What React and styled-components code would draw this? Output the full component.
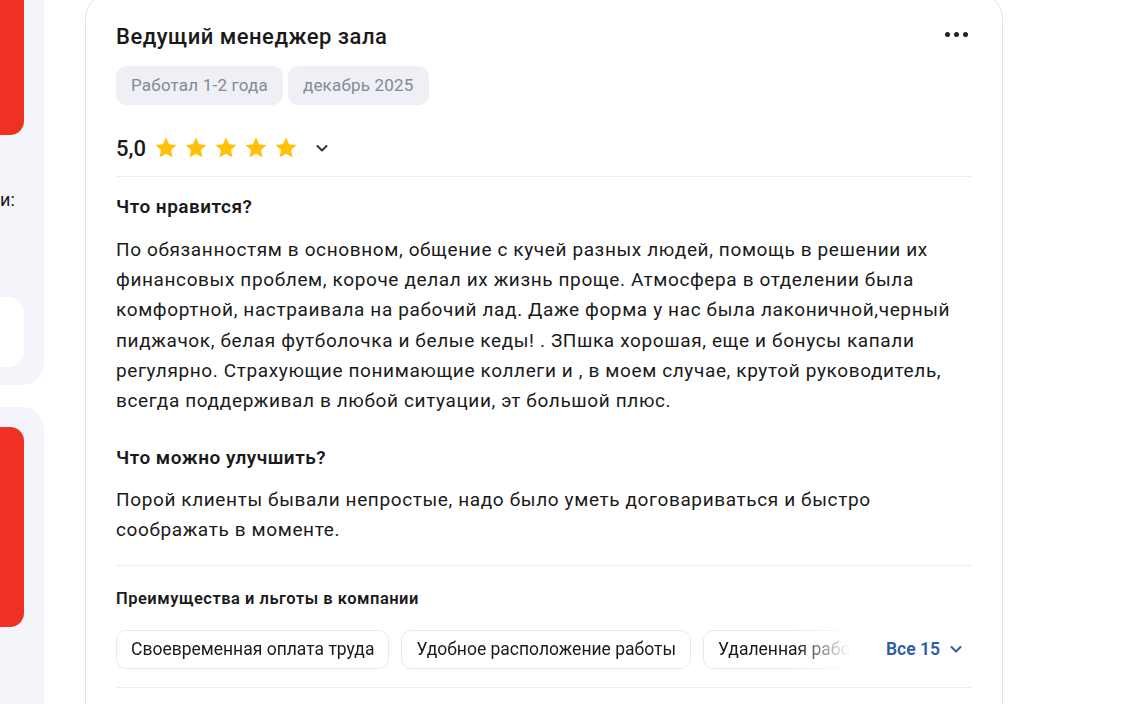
import React from "react";
import styled, { createGlobalStyle } from "styled-components";

const Global = createGlobalStyle`
  html, body { margin: 0; padding: 0; background: #fff; }
  body { font-family: Roboto, "Noto Sans", sans-serif; color: #1a1a1a; overflow: hidden; }
  * { box-sizing: border-box; }
`;

const Page = styled.div`
  display: flex;
  align-items: flex-start;
  width: 1147px;
  height: 704px;
  overflow: hidden;
`;

const Sidebar = styled.div`
  width: 44px;
  flex: none;
  display: flex;
  flex-direction: column;
  gap: 22px;
`;

const SidePanel = styled.div`
  background: #f4f5fa;
  border-radius: ${(p) => (p.$top ? "0 0 22px 0" : "0 22px 0 0")};
  height: ${(p) => p.$h}px;
  padding-top: ${(p) => p.$pt || 0}px;
  display: flex;
  flex-direction: column;
`;

const RedBlock = styled.div`
  width: 24px;
  height: ${(p) => p.$h}px;
  background: #ef3124;
  border-radius: ${(p) => (p.$top ? "0 0 14px 0" : "0 14px 14px 0")};
`;

const SideText = styled.div`
  font-size: 18px;
  line-height: 20px;
  margin-top: 55px;
  color: #1a1a1a;
`;

const WhiteBlock = styled.div`
  width: 24px;
  height: 70px;
  margin-top: 87px;
  background: #fff;
  border-radius: 0 16px 16px 0;
`;

const Card = styled.div`
  margin-left: 41px;
  margin-top: -6px;
  width: 918px;
  height: 760px;
  border: 1px solid #e1e4ec;
  border-radius: 24px;
  padding: 28px 30px 0 30px;
  background: #fff;
`;

const Header = styled.div`
  display: flex;
  align-items: center;
  justify-content: space-between;
`;

const Title = styled.h2`
  margin: 0;
  font-size: 22px;
  line-height: 28px;
  font-weight: 500;
  letter-spacing: 0.5px;
  color: #1a1a1a;
`;

const Dots = styled.div`
  display: flex;
  gap: 4px;
  margin-right: 4px;
  margin-top: -6px;
  span {
    width: 5px;
    height: 5px;
    border-radius: 50%;
    background: #222;
  }
`;

const Tags = styled.div`
  display: flex;
  gap: 5px;
  margin-top: 15px;
`;

const Tag = styled.div`
  height: 39px;
  line-height: 39px;
  padding: 0 15px;
  background: #eef0f6;
  border-radius: 10px;
  color: #838a99;
  font-size: 17px;
  letter-spacing: 0.2px;
`;

const RatingRow = styled.div`
  display: flex;
  align-items: center;
  height: 32px;
  margin-top: 27px;
`;

const Score = styled.span`
  font-size: 22px;
  font-weight: 500;
  margin-right: 8px;
  color: #1a1a1a;
`;

const Stars = styled.div`
  display: flex;
  gap: 6px;
`;

const Chevron = styled.svg`
  margin-left: ${(p) => p.$ml ?? 16}px;
  width: 16px;
  height: 16px;
  flex: none;
`;

const Divider = styled.div`
  height: 1px;
  background: #eceef3;
  margin-top: ${(p) => p.$mt}px;
`;

const SectionTitle = styled.h3`
  margin: ${(p) => p.$mt}px 0 0;
  font-size: ${(p) => p.$fs || 19}px;
  line-height: 24px;
  font-weight: 600;
  letter-spacing: 0.5px;
  color: #1a1a1a;
`;

const Body = styled.p`
  margin: ${(p) => p.$mt}px 0 0;
  font-size: 19px;
  line-height: 30.2px;
  letter-spacing: 0.62px;
  color: #1a1a1a;
  white-space: nowrap;
`;

const BenefitsRow = styled.div`
  display: flex;
  align-items: center;
  margin-top: 19px;
`;

const ChipsViewport = styled.div`
  width: 734px;
  flex: none;
  overflow: hidden;
  display: flex;
  gap: 12px;
  -webkit-mask-image: linear-gradient(to right, #000 680px, transparent 734px);
  mask-image: linear-gradient(to right, #000 680px, transparent 734px);
`;

const Chip = styled.div`
  flex: none;
  height: 39px;
  line-height: 37px;
  padding: 0 14px;
  border: 1px solid #e7e9f0;
  border-radius: 10px;
  font-size: 17.5px;
  color: #1a1a1a;
  white-space: nowrap;
`;

const AllButton = styled.button`
  margin-left: 36px;
  flex: none;
  border: none;
  background: none;
  padding: 0;
  display: flex;
  align-items: center;
  gap: 8px;
  white-space: nowrap;
  font-family: inherit;
  font-size: 17.5px;
  font-weight: 600;
  color: #2f5ca6;
`;

const Star = () => (
  <svg width="24" height="24" viewBox="0 0 24 24">
    <path
      d="M12 1.6l3.1 6.7 7.3.8-5.4 5 1.5 7.2L12 17.7l-6.5 3.6 1.5-7.2-5.4-5 7.3-.8z"
      fill="#ffc107"
    />
  </svg>
);

const ChevronDown = ({ color = "#333", ml }) => (
  <Chevron $ml={ml} viewBox="0 0 16 16">
    <path d="M3.5 6l4.5 4.5L12.5 6" fill="none" stroke={color} strokeWidth="2" strokeLinecap="round" strokeLinejoin="round" />
  </Chevron>
);

const likeLines = [
  "По обязанностям в основном, общение с кучей разных людей, помощь в решении их",
  "финансовых проблем, короче делал их жизнь проще. Атмосфера в отделении была",
  "комфортной, настраивала на рабочий лад. Даже форма у нас была лаконичной,черный",
  "пиджачок, белая футболочка и белые кеды! . ЗПшка хорошая, еще и бонусы капали",
  "регулярно. Страхующие понимающие коллеги и , в моем случае, крутой руководитель,",
  "всегда поддерживал в любой ситуации, эт большой плюс.",
];

const improveLines = [
  "Порой клиенты бывали непростые, надо было уметь договариваться и быстро",
  "соображать в моменте.",
];

const Lines = ({ lines }) =>
  lines.map((l, i) => (
    <React.Fragment key={i}>
      {l}
      {i < lines.length - 1 && <br />}
    </React.Fragment>
  ));

export default function App() {
  return (
    <>
      <Global />
      <Page>
        <Sidebar>
          <SidePanel $top $h={385}>
            <RedBlock $top $h={135} />
            <SideText>и:</SideText>
            <WhiteBlock />
          </SidePanel>
          <SidePanel $h={320} $pt={20}>
            <RedBlock $h={200} />
          </SidePanel>
        </Sidebar>
        <Card>
          <Header>
            <Title>Ведущий менеджер зала</Title>
            <Dots>
              <span />
              <span />
              <span />
            </Dots>
          </Header>
          <Tags>
            <Tag>Работал 1-2 года</Tag>
            <Tag>декабрь 2025</Tag>
          </Tags>
          <RatingRow>
            <Score>5,0</Score>
            <Stars>
              <Star />
              <Star />
              <Star />
              <Star />
              <Star />
            </Stars>
            <ChevronDown />
          </RatingRow>
          <Divider $mt={12} />
          <SectionTitle $mt={18}>Что нравится?</SectionTitle>
          <Body $mt={16}>
            <Lines lines={likeLines} />
          </Body>
          <SectionTitle $mt={30}>Что можно улучшить?</SectionTitle>
          <Body $mt={15}>
            <Lines lines={improveLines} />
          </Body>
          <Divider $mt={19} />
          <SectionTitle $mt={21} $fs={16.5}>Преимущества и льготы в компании</SectionTitle>
          <BenefitsRow>
            <ChipsViewport>
              <Chip>Своевременная оплата труда</Chip>
              <Chip>Удобное расположение работы</Chip>
              <Chip>Удаленная работа</Chip>
            </ChipsViewport>
            <AllButton>
              Все 15
              <ChevronDown color="#2f5ca6" ml={0} />
            </AllButton>
          </BenefitsRow>
          <Divider $mt={18} />
        </Card>
      </Page>
    </>
  );
}
